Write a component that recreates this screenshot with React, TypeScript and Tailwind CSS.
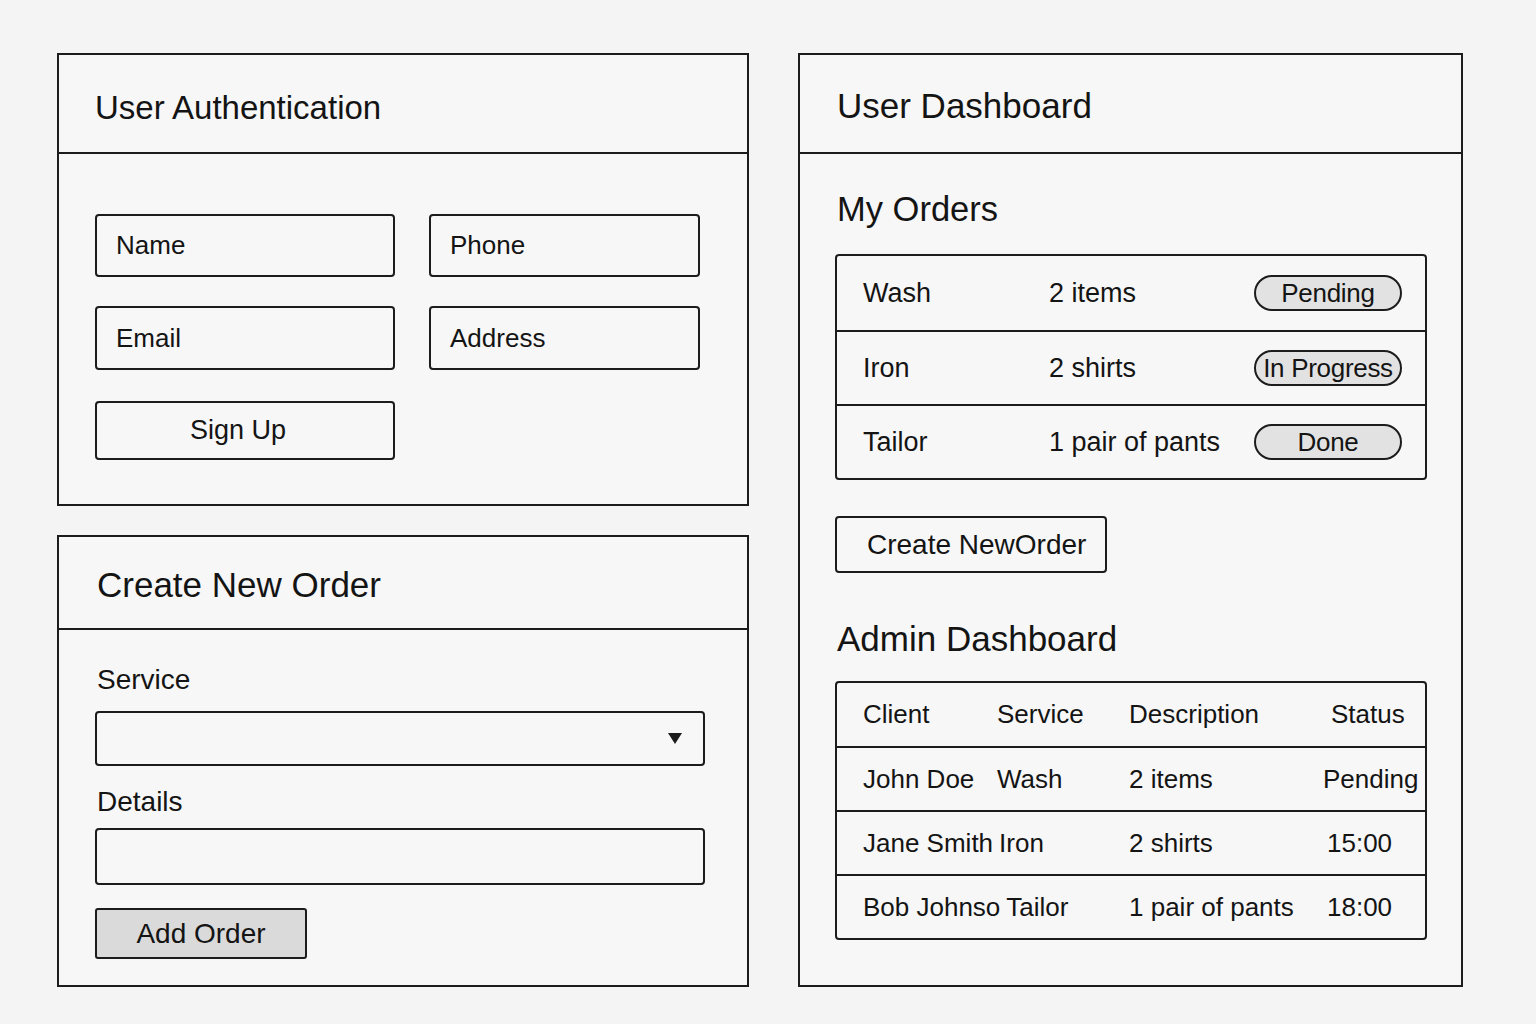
const font = { fontFamily: '"Liberation Sans", Arial, sans-serif' }

function Panel({ title, titleClass, headerClass, children, className }: {
  title: string
  titleClass: string
  headerClass: string
  children: React.ReactNode
  className?: string
}) {
  return (
    <div className={`border-2 border-[#1c1c1c] bg-[#f7f7f7] flex flex-col ${className ?? ''}`}>
      <div className={`border-b-2 border-[#1c1c1c] flex items-center ${headerClass}`}>
        <h2 className={`text-[#141414] leading-none ${titleClass}`}>{title}</h2>
      </div>
      {children}
    </div>
  )
}

function Field({ label, className }: { label: string; className?: string }) {
  return (
    <div
      className={`h-[63px] border-2 border-[#1c1c1c] rounded-[4px] flex items-center pl-[19px] text-[26px] text-[#141414] ${className ?? ''}`}
    >
      {label}
    </div>
  )
}

const orders = [
  { service: 'Wash', desc: '2 items', status: 'Pending' },
  { service: 'Iron', desc: '2 shirts', status: 'In Progress' },
  { service: 'Tailor', desc: '1 pair of pants', status: 'Done' },
]

const adminRows = [
  ['John Doe', 'Wash', '2 items', 'Pending'],
  ['Jane Smith', 'Iron', '2 shirts', '15:00'],
  ['Bob Johnso', 'Tailor', '1 pair of pants', '18:00'],
]

export default function App() {
  return (
    <div style={font} className="min-h-[1024px] w-[1536px] bg-[#f4f4f4] flex gap-[49px] pl-[57px] pt-[53px] text-[#141414]">
      <div className="w-[692px] flex flex-col gap-[29px]">
        {/* auth */}
        <Panel
          title="User Authentication"
          titleClass="text-[33px] pl-[36px] pt-[8px]"
          headerClass="h-[99px]"
          className="h-[453px]"
        >
          <div className="pl-[36px] pt-[60px] grid grid-cols-[300px_271px] gap-x-[34px]">
            <Field label="Name" />
            <Field label="Phone" />
            <Field label="Email" className="mt-[29px] h-[64px]" />
            <Field label="Address" className="mt-[29px] h-[64px]" />
            <button className="mt-[31px] h-[59px] border-2 border-[#1c1c1c] rounded-[4px] text-[27px] flex items-center justify-center pr-[14px]">
              Sign Up
            </button>
          </div>
        </Panel>

        {/* new order */}
        <Panel
          title="Create New Order"
          titleClass="text-[35px] pl-[38px] pt-[4px]"
          headerClass="h-[93px]"
          className="h-[452px]"
        >
          <div className="pl-[36px] pr-[42px] pt-[34px] flex flex-col">
            <label className="text-[28px] leading-[32px] pl-[2px]">Service</label>
            <div className="mt-[15px] h-[55px] border-2 border-[#1c1c1c] rounded-[4px] flex items-center justify-end pr-[20px]">
              <svg width="16" height="13" viewBox="0 0 16 13">
                <path d="M1 1 H15 L8 12 Z" fill="#1c1c1c" />
              </svg>
            </div>
            <label className="mt-[20px] text-[28px] leading-[32px] pl-[2px]">Details</label>
            <div className="mt-[10px] h-[57px] border-2 border-[#1c1c1c] rounded-[4px]" />
            <button className="mt-[23px] w-[212px] h-[51px] bg-[#dadada] border-2 border-[#1c1c1c] rounded-[3px] text-[28px] flex items-center justify-center">
              Add Order
            </button>
          </div>
        </Panel>
      </div>

      {/* dashboard */}
      <Panel
        title="User Dashboard"
        titleClass="text-[35px] pl-[37px] pt-[4px]"
        headerClass="h-[99px]"
        className="w-[665px] h-[934px]"
      >
        <div className="pl-[35px] pr-[34px] pt-[35px] flex flex-col">
          <h3 className="text-[34.5px] leading-[40px] pl-[2px]">My Orders</h3>
          <div className="mt-[25px] border-2 border-[#1c1c1c] rounded-[4px] flex flex-col">
            {orders.map((o, i) => (
              <div
                key={o.service}
                className={`h-[74px] flex items-center pl-[26px] pr-[23px] text-[27px] ${i > 0 ? 'border-t-2 border-[#1c1c1c]' : ''}`}
              >
                <span className="w-[186px]">{o.service}</span>
                <span className="flex-1">{o.desc}</span>
                <span className="w-[148px] h-[36px] rounded-full border-2 border-[#1c1c1c] bg-[#e2e2e2] flex items-center justify-center text-[26px] tracking-[-0.3px] whitespace-nowrap">
                  {o.status}
                </span>
              </div>
            ))}
          </div>
          <button className="mt-[36px] w-[272px] h-[57px] border-2 border-[#1c1c1c] rounded-[4px] text-[28px] text-left pl-[30px]">
            Create NewOrder
          </button>
          <h3 className="mt-[46px] text-[35px] leading-[40px] pl-[2px]">Admin Dashboard</h3>
          <div className="mt-[22px] border-2 border-[#1c1c1c] rounded-[4px] flex flex-col text-[26px]">
            <div className="h-[63px] flex items-center pl-[26px]">
              <span className="w-[134px]">Client</span>
              <span className="w-[132px]">Service</span>
              <span className="w-[202px]">Description</span>
              <span>Status</span>
            </div>
            {adminRows.map((r) => (
              <div
                key={r[0]}
                className="h-[64px] border-t-2 border-[#1c1c1c] flex items-center pl-[26px] whitespace-nowrap"
              >
                <div className="w-[266px] flex">
                  <span className="min-w-[134px] pr-[6px]">{r[0]}</span>
                  <span>{r[1]}</span>
                </div>
                <span className="w-[194px]">{r[2]}</span>
                <span className={r[3] === 'Pending' ? '' : 'pl-[4px]'}>{r[3]}</span>
              </div>
            ))}
          </div>
        </div>
      </Panel>
    </div>
  )
}
